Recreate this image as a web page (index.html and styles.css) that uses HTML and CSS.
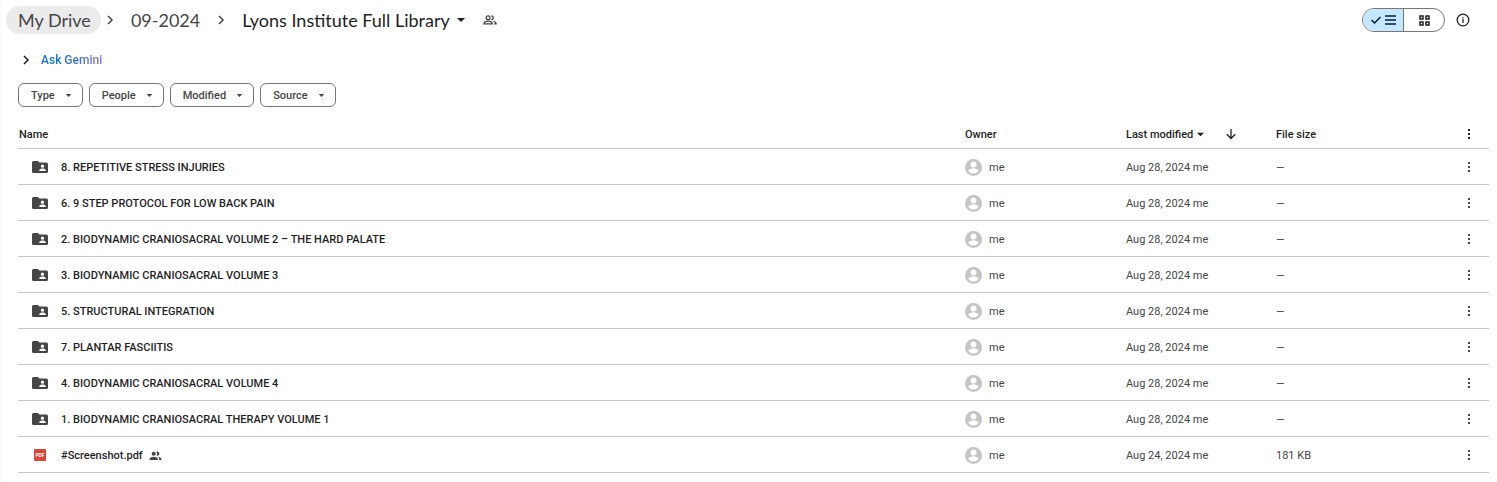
FILE: index.html
```html
<!DOCTYPE html>
<html lang="en">
<head>
  <meta charset="UTF-8">
  <meta name="viewport" content="width=device-width, initial-scale=1.0">
  <title>Lyons Institute Full Library - Drive</title>
  <link rel="stylesheet" href="styles.css">
</head>
<body>
  <!-- Shared icons -->
  <svg class="sprite" aria-hidden="true">
    <symbol id="chevron" viewBox="0 0 12 12"><path d="M4 2l4 4-4 4" fill="none" stroke="currentColor" stroke-width="1.5"/></symbol>
    <symbol id="caret" viewBox="0 0 10 10"><path d="M1 3h8L5 7z" fill="currentColor"/></symbol>
    <symbol id="more" viewBox="0 0 12 12"><path d="M5 1h2v2H5zM5 5h2v2H5zM5 9h2v2H5z" fill="currentColor"/></symbol>
    <symbol id="folder" viewBox="0 0 16 12">
      <path d="M1.500 0H6l1.500 1.500h7A1.500 1.500 0 0 1 16 3v7.500a1.500 1.500 0 0 1-1.500 1.500h-13A1.500 1.500 0 0 1 0 10.500v-9A1.500 1.500 0 0 1 1.500 0z" fill="#444746"/>
      <circle cx="10.500" cy="5.200" r="1.600" fill="#fff"/>
      <path d="M7.300 10V9c0-1 2-1.600 3.200-1.600s3.200.6 3.200 1.600v1z" fill="#fff"/>
    </symbol>
    <symbol id="avatar" viewBox="2 2 20 20"><path d="M12 2a10 10 0 1 0 0 20 10 10 0 0 0 0-20zm0 3a3.500 3.500 0 1 1 0 7 3.500 3.500 0 0 1 0-7zm0 14.200a7.200 7.200 0 0 1-6-3.200c0-2 4-3.100 6-3.100s6 1.100 6 3.100a7.200 7.200 0 0 1-6 3.200z" fill="#c4c4c4"/></symbol>
    <symbol id="people" viewBox="1 4 22 15"><path d="M9 13.750c-2.340 0-7 1.170-7 3.500V19h14v-1.750c0-2.330-4.660-3.500-7-3.500zM9 12a3.500 3.500 0 1 0 0-7 3.500 3.500 0 0 0 0 7zm7.040 1.810c1.160.84 1.960 1.960 1.960 3.440V19h4v-1.750c0-2.020-3.500-3.170-5.960-3.440zM15 12a3.500 3.500 0 1 0-1.500-6.650 5.500 5.500 0 0 1 0 6.300c.45.220.96.350 1.500.35z" fill="currentColor"/></symbol>
  </svg>

  <main class="drive">
    <header class="topbar">
      <nav class="breadcrumbs" aria-label="Breadcrumbs">
        <a class="crumb crumb-root" href="#">My Drive</a>
        <svg class="icon-chevron"><use href="#chevron"/></svg>
        <a class="crumb" href="#">09-2024</a>
        <svg class="icon-chevron"><use href="#chevron"/></svg>
        <button class="crumb crumb-current">Lyons Institute Full Library <svg class="icon-caret"><use href="#caret"/></svg></button>
        <button class="share" aria-label="Manage sharing">
          <svg width="14" height="12" viewBox="1 4 22 16" fill="none" stroke="currentColor" stroke-width="2">
            <circle cx="9" cy="8.500" r="3"/>
            <path d="M2.500 18v-1c0-2 4.300-3.200 6.500-3.200s6.500 1.200 6.500 3.200v1zM14 5.500a3 3 0 0 1 0 6M17.500 14c2.200.6 4 1.500 4 3v1.200h-3"/>
          </svg>
        </button>
      </nav>
      <div class="tools">
        <div class="view-toggle">
          <button class="view view-active" aria-label="List layout" aria-pressed="true">
            <svg width="12" height="12" viewBox="0 0 12 12"><path d="M1.500 6l3 3 6-6" fill="none" stroke="currentColor" stroke-width="1.500"/></svg>
            <svg width="11" height="10" viewBox="0 0 11 10"><path d="M0 1h11M0 5h11M0 9h11" stroke="currentColor" stroke-width="1.500"/></svg>
          </button>
          <button class="view" aria-label="Grid layout" aria-pressed="false">
            <svg width="11" height="11" viewBox="0 0 11 11"><path d="M1 1h3v3H1zM7 1h3v3H7zM1 7h3v3H1zM7 7h3v3H7z" fill="none" stroke="currentColor" stroke-width="1.500"/></svg>
          </button>
        </div>
        <button class="info" aria-label="View details">
          <svg width="14" height="14" viewBox="0 0 14 14"><circle cx="7" cy="7" r="5.800" fill="none" stroke="currentColor" stroke-width="1.300"/><path d="M7 6v4M7 4v1.300" stroke="currentColor" stroke-width="1.300"/></svg>
        </button>
      </div>
    </header>

    <button class="gemini">
      <svg class="icon-expand"><use href="#chevron"/></svg>
      <span class="gemini-label">Ask Gemini</span>
    </button>

    <div class="filters">
      <button class="filter">Type <svg class="icon-small-caret"><use href="#caret"/></svg></button>
      <button class="filter">People <svg class="icon-small-caret"><use href="#caret"/></svg></button>
      <button class="filter">Modified <svg class="icon-small-caret"><use href="#caret"/></svg></button>
      <button class="filter">Source <svg class="icon-small-caret"><use href="#caret"/></svg></button>
    </div>

    <table class="files">
      <thead>
        <tr>
          <th class="col-name">Name</th>
          <th class="col-owner">Owner</th>
          <th class="col-modified">
            <div class="sort">
              <button class="sort-by">Last modified <svg class="icon-sort-caret"><use href="#caret"/></svg></button>
              <button class="sort-direction" aria-label="Reverse sort direction"><svg width="12" height="12" viewBox="0 0 12 12"><path d="M6 1v9.500M1.800 6.300L6 10.500l4.200-4.200" fill="none" stroke="currentColor" stroke-width="1.300"/></svg></button>
            </div>
          </th>
          <th class="col-size">File size</th>
          <th class="col-more"><button class="more" aria-label="More options"><svg class="icon-more"><use href="#more"/></svg></button></th>
        </tr>
      </thead>
      <tbody>
        <tr>
          <td><div class="file"><svg class="icon-folder"><use href="#folder"/></svg><span>8. REPETITIVE STRESS INJURIES</span></div></td>
          <td><div class="owner"><svg class="icon-avatar"><use href="#avatar"/></svg>me</div></td>
          <td>Aug 28, 2024 <span class="by">me</span></td>
          <td>—</td>
          <td class="col-more"><button class="more" aria-label="More actions"><svg class="icon-more"><use href="#more"/></svg></button></td>
        </tr>
        <tr>
          <td><div class="file"><svg class="icon-folder"><use href="#folder"/></svg><span>6. 9 STEP PROTOCOL FOR LOW BACK PAIN</span></div></td>
          <td><div class="owner"><svg class="icon-avatar"><use href="#avatar"/></svg>me</div></td>
          <td>Aug 28, 2024 <span class="by">me</span></td>
          <td>—</td>
          <td class="col-more"><button class="more" aria-label="More actions"><svg class="icon-more"><use href="#more"/></svg></button></td>
        </tr>
        <tr>
          <td><div class="file"><svg class="icon-folder"><use href="#folder"/></svg><span>2. BIODYNAMIC CRANIOSACRAL VOLUME 2 – THE HARD PALATE</span></div></td>
          <td><div class="owner"><svg class="icon-avatar"><use href="#avatar"/></svg>me</div></td>
          <td>Aug 28, 2024 <span class="by">me</span></td>
          <td>—</td>
          <td class="col-more"><button class="more" aria-label="More actions"><svg class="icon-more"><use href="#more"/></svg></button></td>
        </tr>
        <tr>
          <td><div class="file"><svg class="icon-folder"><use href="#folder"/></svg><span>3. BIODYNAMIC CRANIOSACRAL VOLUME 3</span></div></td>
          <td><div class="owner"><svg class="icon-avatar"><use href="#avatar"/></svg>me</div></td>
          <td>Aug 28, 2024 <span class="by">me</span></td>
          <td>—</td>
          <td class="col-more"><button class="more" aria-label="More actions"><svg class="icon-more"><use href="#more"/></svg></button></td>
        </tr>
        <tr>
          <td><div class="file"><svg class="icon-folder"><use href="#folder"/></svg><span>5. STRUCTURAL INTEGRATION</span></div></td>
          <td><div class="owner"><svg class="icon-avatar"><use href="#avatar"/></svg>me</div></td>
          <td>Aug 28, 2024 <span class="by">me</span></td>
          <td>—</td>
          <td class="col-more"><button class="more" aria-label="More actions"><svg class="icon-more"><use href="#more"/></svg></button></td>
        </tr>
        <tr>
          <td><div class="file"><svg class="icon-folder"><use href="#folder"/></svg><span>7. PLANTAR FASCIITIS</span></div></td>
          <td><div class="owner"><svg class="icon-avatar"><use href="#avatar"/></svg>me</div></td>
          <td>Aug 28, 2024 <span class="by">me</span></td>
          <td>—</td>
          <td class="col-more"><button class="more" aria-label="More actions"><svg class="icon-more"><use href="#more"/></svg></button></td>
        </tr>
        <tr>
          <td><div class="file"><svg class="icon-folder"><use href="#folder"/></svg><span>4. BIODYNAMIC CRANIOSACRAL VOLUME 4</span></div></td>
          <td><div class="owner"><svg class="icon-avatar"><use href="#avatar"/></svg>me</div></td>
          <td>Aug 28, 2024 <span class="by">me</span></td>
          <td>—</td>
          <td class="col-more"><button class="more" aria-label="More actions"><svg class="icon-more"><use href="#more"/></svg></button></td>
        </tr>
        <tr>
          <td><div class="file"><svg class="icon-folder"><use href="#folder"/></svg><span>1. BIODYNAMIC CRANIOSACRAL THERAPY VOLUME 1</span></div></td>
          <td><div class="owner"><svg class="icon-avatar"><use href="#avatar"/></svg>me</div></td>
          <td>Aug 28, 2024 <span class="by">me</span></td>
          <td>—</td>
          <td class="col-more"><button class="more" aria-label="More actions"><svg class="icon-more"><use href="#more"/></svg></button></td>
        </tr>
        <tr>
          <td><div class="file"><span class="icon-pdf">PDF</span><span>#Screenshot.pdf</span><svg class="icon-people"><use href="#people"/></svg></div></td>
          <td><div class="owner"><svg class="icon-avatar"><use href="#avatar"/></svg>me</div></td>
          <td>Aug 24, 2024 <span class="by">me</span></td>
          <td>181 KB</td>
          <td class="col-more"><button class="more" aria-label="More actions"><svg class="icon-more"><use href="#more"/></svg></button></td>
        </tr>
      </tbody>
    </table>
  </main>
</body>
</html>
```
FILE: styles.css
```css
* {
  box-sizing: border-box;
}
body {
  margin: 0;
  background-color: #fff;
  border-left: 2px solid #f8fafd;
  color: #1f1f1f;
  font-family: Roboto, sans-serif;
  font-size: 11px;
  line-height: 17px;
}
button {
  display: flex;
  align-items: center;
  margin: 0;
  padding: 0;
  border: 0;
  background: none;
  color: inherit;
  font: inherit;
  cursor: pointer;
}
svg {
  display: block;
  flex: none;
}
.sprite {
  position: absolute;
  width: 0;
  height: 0;
}
.drive {
  min-height: 100vh;
  padding: 6px 8px 0 4px;
}

/* Top bar */
.topbar {
  display: flex;
  justify-content: space-between;
  align-items: center;
  height: 28px;
}
.breadcrumbs {
  display: flex;
  align-items: center;
  color: #444746;
}
.crumb {
  padding: 0 12px;
  border-radius: 14px;
  color: #444746;
  font-family: Lato, sans-serif;
  font-size: 18px;
  line-height: 28px;
  text-decoration: none;
  white-space: nowrap;
}
.crumb-root {
  padding-right: 10px;
  background-color: #ebebeb;
}
.crumb-current {
  gap: 6px;
  color: #1f1f1f;
}
.icon-chevron {
  width: 12px;
  height: 12px;
  margin: 0 3px;
}
.icon-caret {
  width: 10px;
  height: 10px;
}
.share {
  padding-left: 5px;
}
.tools {
  display: flex;
  align-items: center;
  gap: 11px;
  padding-right: 19px;
}
.view-toggle {
  display: flex;
  height: 24px;
  border: 1px solid #747775;
  border-radius: 12px;
  overflow: hidden;
}
.view {
  justify-content: center;
  gap: 3px;
  width: 40px;
}
.view-active {
  width: 41px;
  border-right: 1px solid #747775;
  background-color: #c2e7ff;
  color: #001d35;
}

/* Gemini prompt */
.gemini {
  gap: 9px;
  margin: 17px 0 0 14px;
  font-size: 12px;
  line-height: 18px;
}
.icon-expand {
  width: 12px;
  height: 12px;
}
.gemini-label {
  background: linear-gradient(90deg, #0b70e8 30%, #9b72cb 110%);
  background-clip: text;
  -webkit-background-clip: text;
  color: transparent;
  font-weight: 500;
}

/* Filter chips */
.filters {
  display: flex;
  gap: 6px;
  margin: 14px 0 0 12px;
}
.filter {
  gap: 10px;
  height: 24px;
  padding: 0 10px 0 12px;
  border: 1px solid #747775;
  border-radius: 6px;
  color: #444746;
  font-weight: 500;
}
.icon-small-caret {
  width: 7px;
  height: 7px;
}

/* File list */
.files {
  width: calc(100% - 12px);
  margin: 13px 0 0 12px;
  border-spacing: 0;
  table-layout: fixed;
}
.files th,
.files td {
  height: 36px;
  padding: 0;
  border-bottom: 1px solid #c7c7c7;
  text-align: left;
  white-space: nowrap;
}
.files th {
  height: 29px;
  font-weight: 500;
}
.files td {
  padding-top: 1px;
  color: #444746;
}
.files .col-name {
  padding-left: 1px;
}
.col-owner {
  width: 161px;
}
.col-modified {
  width: 150px;
}
.col-size {
  width: 174px;
}
.files th.col-more {
  width: 39px;
}
.sort,
.file,
.owner {
  display: flex;
  align-items: center;
}
.sort {
  gap: 20px;
}
.sort-by {
  gap: 3px;
}
.icon-sort-caret {
  width: 9px;
  height: 9px;
}
.file {
  gap: 6px;
  padding-left: 14px;
  color: #1f1f1f;
  font-weight: 500;
}
.icon-folder {
  width: 16px;
  height: 12px;
  margin-right: 7px;
}
.icon-pdf {
  width: 12px;
  height: 12px;
  margin: 0 9px 0 2px;
  border-radius: 1px;
  background-color: #db4437;
  color: #fff;
  font-size: 5px;
  font-weight: 700;
  line-height: 12px;
  text-align: center;
}
.icon-people {
  width: 13px;
  height: 9px;
  color: #444746;
}
.owner {
  gap: 7px;
}
.icon-avatar {
  width: 17px;
  height: 17px;
}
.more {
  margin-left: 13px;
}
.icon-more {
  width: 12px;
  height: 12px;
}
```
